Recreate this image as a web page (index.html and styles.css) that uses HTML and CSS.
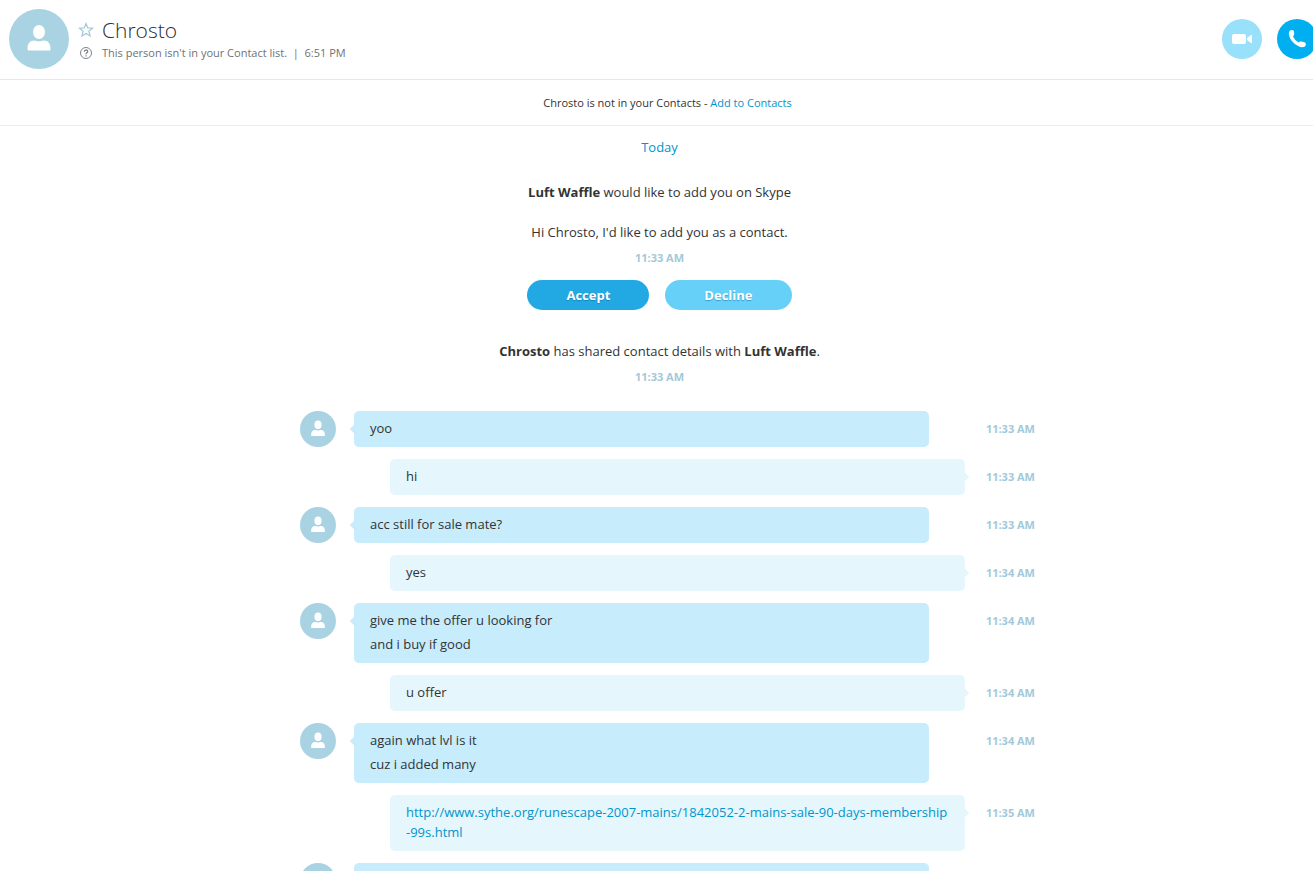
FILE: index.html
```html
<!DOCTYPE html>
<html lang="en">
<head>
    <meta charset="UTF-8">
    <meta name="viewport" content="width=device-width, initial-scale=1.0">
    <title>Chrosto</title>
    <link rel="stylesheet" href="styles.css">
</head>
<body>
    <svg class="sprite" aria-hidden="true">
        <symbol id="person" viewBox="0 0 60 60">
            <ellipse cx="30" cy="23" rx="6" ry="7"/>
            <path d="M18.500 39.500C18.500 34.500 21 31.500 25 31.500C27 31.500 28 32.500 30 32.500C32 32.500 33 31.500 35 31.500C39 31.500 41.500 34.500 41.500 39.500C41.500 41 41 41.500 40 41.500H20C19 41.500 18.500 41 18.500 39.500Z"/>
        </symbol>
    </svg>

    <div class="app">
        <header class="header">
            <div class="avatar avatar-large">
                <svg><use href="#person"/></svg>
            </div>
            <div class="contact">
                <div class="contact-row name-row">
                    <button class="favorite" aria-label="Add to favorites">
                        <svg width="16" height="16" viewBox="0 0 16 16">
                            <path d="M8 1.500L9.800 5.900L14.600 6.200L10.900 9.300L12.100 14L8 11.400L3.900 14L5.100 9.300L1.400 6.200L6.200 5.900Z" fill="none" stroke="#a3c9d9" stroke-width="1.200"/>
                        </svg>
                    </button>
                    <h1>Chrosto</h1>
                </div>
                <div class="contact-row">
                    <svg width="14" height="14" viewBox="0 0 14 14">
                        <circle cx="7" cy="7" r="5.500" fill="none" stroke="#7f8488" stroke-width="1"/>
                        <path d="M5.300 5.700C5.300 3.500 8.700 3.500 8.700 5.500C8.700 6.800 7 6.700 7 8.200M7 9.200V10.400" fill="none" stroke="#7f8488" stroke-width="1.300"/>
                    </svg>
                    <p>This person isn't in your Contact list. &nbsp;|&nbsp; 6:51 PM</p>
                </div>
            </div>
            <div class="calls">
                <button class="call video" aria-label="Video call">
                    <svg width="40" height="40" viewBox="0 0 40 40">
                        <rect x="10" y="15" width="14" height="10" rx="2"/>
                        <path d="M25 19L29 16Q30 15.500 30 16.500V23.500Q30 24.500 29 24L25 21Z"/>
                    </svg>
                </button>
                <button class="call voice" aria-label="Call">
                    <svg width="40" height="40" viewBox="0 0 40 40">
                        <path d="M13 11.500Q15 10.300 16.800 11.800Q17.800 14.500 16.800 16.400L15.900 17.300Q17.500 21.300 21.700 23.600L23 22.500Q25 22 28.200 23.500Q29.800 25.500 28.200 27.200Q25.300 29.400 21.500 27.200Q13 23 11.800 15Q11.700 12.500 13 11.500Z"/>
                    </svg>
                </button>
            </div>
        </header>

        <div class="notice">Chrosto is not in your Contacts - <a href="#">Add to Contacts</a></div>

        <main class="chat">
            <section class="system">
                <p class="day">Today</p>
                <div class="event">
                    <p><b>Luft Waffle</b> would like to add you on Skype</p>
                    <p class="request-text">Hi Chrosto, I'd like to add you as a contact.</p>
                    <time>11:33 AM</time>
                    <div class="actions">
                        <button class="btn accept">Accept</button>
                        <button class="btn decline">Decline</button>
                    </div>
                </div>
                <div class="event">
                    <p><b>Chrosto</b> has shared contact details with <b>Luft Waffle</b>.</p>
                    <time>11:33 AM</time>
                </div>
            </section>

            <section class="messages">
                <div class="message theirs">
                    <div class="avatar"><svg><use href="#person"/></svg></div>
                    <div class="bubble"><p>yoo</p></div>
                    <time>11:33 AM</time>
                </div>
                <div class="message mine">
                    <div class="bubble"><p>hi</p></div>
                    <time>11:33 AM</time>
                </div>
                <div class="message theirs">
                    <div class="avatar"><svg><use href="#person"/></svg></div>
                    <div class="bubble"><p>acc still for sale mate?</p></div>
                    <time>11:33 AM</time>
                </div>
                <div class="message mine">
                    <div class="bubble"><p>yes</p></div>
                    <time>11:34 AM</time>
                </div>
                <div class="message theirs">
                    <div class="avatar"><svg><use href="#person"/></svg></div>
                    <div class="bubble">
                        <p>give me the offer u looking for</p>
                        <p>and i buy if good</p>
                    </div>
                    <time>11:34 AM</time>
                </div>
                <div class="message mine">
                    <div class="bubble"><p>u offer</p></div>
                    <time>11:34 AM</time>
                </div>
                <div class="message theirs">
                    <div class="avatar"><svg><use href="#person"/></svg></div>
                    <div class="bubble">
                        <p>again what lvl is it</p>
                        <p>cuz i added many</p>
                    </div>
                    <time>11:34 AM</time>
                </div>
                <div class="message mine">
                    <div class="bubble">
                        <p><a href="#">http://www.sythe.org/runescape-2007-mains/1842052-2-mains-sale-90-days-membership<br>-99s.html</a></p>
                    </div>
                    <time>11:35 AM</time>
                </div>
                <div class="message theirs">
                    <div class="avatar"><svg><use href="#person"/></svg></div>
                    <div class="bubble"></div>
                </div>
            </section>
        </main>
    </div>
</body>
</html>
```
FILE: styles.css
```css
* {
    margin: 0;
    padding: 0;
    box-sizing: border-box;
}

body {
    font-family: "Segoe UI", "Open Sans", "Noto Sans", sans-serif;
    font-size: 13px;
    line-height: 20px;
    color: #333333;
    background: #ffffff;
    overflow: hidden;
}

a {
    color: #0095cc;
    text-decoration: none;
}

button {
    font: inherit;
    border: none;
    background: none;
    cursor: pointer;
}

svg {
    display: block;
}

.sprite {
    display: none;
}

/* runs a little past the right edge of the window */
.app {
    display: flex;
    flex-direction: column;
    height: 100vh;
    margin-right: -22px;
    padding-bottom: 12px;
}

.header {
    display: flex;
    align-items: center;
    flex-shrink: 0;
    height: 80px;
    padding: 0 18px 2px 9px;
    border-bottom: 1px solid #e0eaec;
}

.avatar {
    flex: none;
    width: 36px;
    height: 36px;
    border-radius: 50%;
    background: #a9d3e2;
    fill: #ffffff;
}

.avatar svg {
    width: 100%;
    height: 100%;
}

.avatar-large {
    width: 60px;
    height: 60px;
}

.contact {
    flex: 1;
    margin-left: 9px;
    padding-top: 3px;
}

.contact-row {
    display: flex;
    align-items: center;
    font-size: 11px;
    color: #6e7276;
}

.contact-row > svg,
.favorite {
    display: flex;
    justify-content: center;
    width: 16px;
    margin-right: 8px;
}

.name-row {
    height: 26px;
}

h1 {
    font-size: 21px;
    font-weight: 300;
    color: #2b2c33;
}

.calls {
    display: flex;
    gap: 15px;
}

.call {
    width: 40px;
    height: 40px;
    border-radius: 50%;
    fill: #ffffff;
}

.video {
    background: #99e0fa;
}

.voice {
    background: #00aff0;
}

.notice {
    flex-shrink: 0;
    padding: 13px 0 12px;
    border-bottom: 1px solid #e2eff5;
    font-size: 11px;
    text-align: center;
}

.chat {
    flex: 1;
    min-height: 0;
    overflow: hidden;
    padding-top: 11px;
}

.system {
    padding-right: 16px;
    text-align: center;
}

.day {
    color: #0095cc;
}

.event {
    margin-top: 25px;
}

.event + .event {
    margin-top: 31px;
}

.request-text {
    margin-top: 20px;
}

time {
    font-size: 11px;
    font-weight: 700;
    color: #a3c9d9;
}

.event time {
    display: block;
    margin-top: 6px;
}

.actions {
    display: flex;
    justify-content: center;
    gap: 16px;
    margin-top: 12px;
}

.btn {
    height: 30px;
    padding: 0 39px;
    border-radius: 15px;
    font-weight: 700;
    color: #ffffff;
    text-shadow: 0 1px 1px rgba(0, 80, 120, 0.4);
}

.accept {
    background: #22a9e3;
}

.decline {
    background: #66d0f8;
}

.messages {
    display: flex;
    flex-direction: column;
    gap: 12px;
    max-width: 735px;
    margin: 24px auto 0;
}

.message {
    display: flex;
    align-items: flex-start;
}

.bubble {
    position: relative;
    flex: 1;
    min-height: 36px;
    padding: 5px 16px 7px;
    border-radius: 5px;
}

.bubble p {
    padding: 2px 0;
}

/* small pointer on the side of the bubble */
.bubble::before {
    content: "";
    position: absolute;
    top: 15px;
    width: 6px;
    height: 6px;
    background: inherit;
    transform: rotate(45deg);
}

.theirs .bubble {
    margin: 0 36px 0 18px;
    background: #c7ecfc;
}

.theirs .bubble::before {
    left: -3px;
}

.mine .bubble {
    margin-left: 90px;
    background: #e5f6fd;
}

.mine .bubble::before {
    right: -3px;
}

.message time {
    width: 70px;
    padding: 8px 0;
    text-align: right;
    white-space: nowrap;
}

.theirs:last-child .bubble {
    margin-right: 106px;
}
```
